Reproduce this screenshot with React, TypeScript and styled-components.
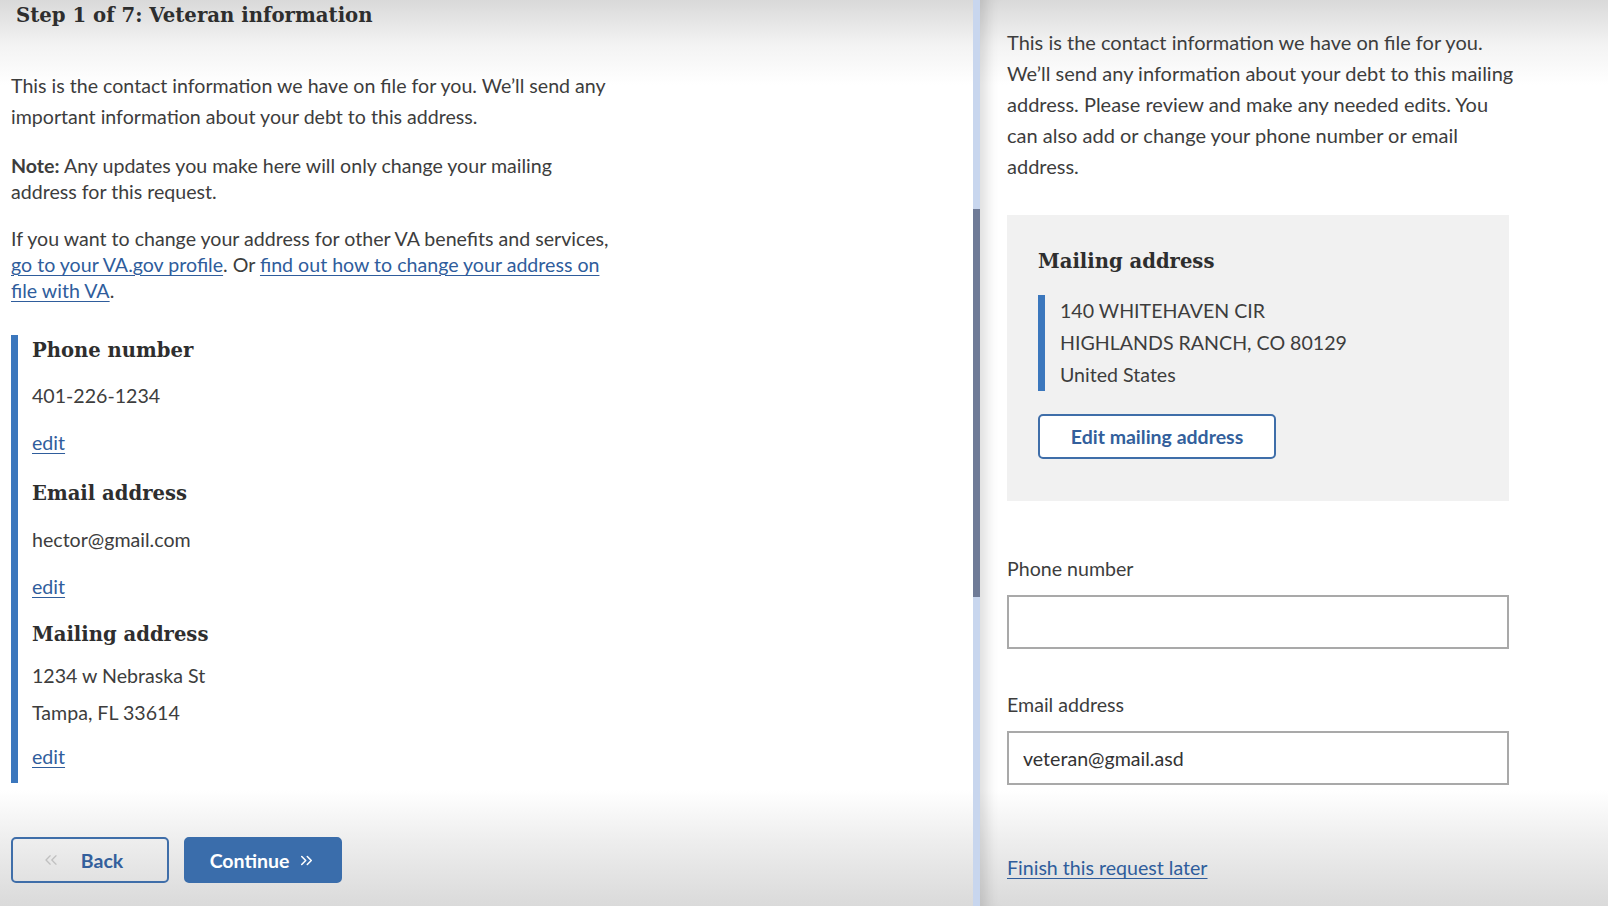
import React from "react";
import styled, { createGlobalStyle } from "styled-components";
import { ChevronsLeft, ChevronsRight } from "lucide-react";

const GlobalStyle = createGlobalStyle`
  html, body { margin: 0; padding: 0; }
  body {
    font-family: Lato, "Liberation Sans", sans-serif;
    color: #3a3a3a;
    -webkit-font-smoothing: antialiased;
  }
`;

const BLUE = "#2f5d9c";
const ACCENT = "#3b77bd";
const SERIF = `"DejaVu Serif", serif`;
const BODY = "19.6px";

const Page = styled.div`
  width: 1608px;
  height: 906px;
  display: grid;
  grid-template-columns: 973px 7px 1fr;
  overflow: hidden;
  background: linear-gradient(
    to bottom,
    #d9d9d9 0px,
    #f3f3f3 45px,
    #ffffff 85px,
    #ffffff 790px,
    #eeeeee 840px,
    #dadada 906px
  );
`;

const LeftPanel = styled.main`
  display: flex;
  flex-direction: column;
  padding-left: 11px;
`;

const Title = styled.h1`
  margin: 0;
  padding: 2px 0 0 5px;
  font-family: ${SERIF};
  font-weight: 700;
  font-size: 19.7px;
  line-height: 28px;
  color: #2e2e2e;
`;

const Para = styled.p<{ $lh: number; $mt: number }>`
  margin: ${(p) => p.$mt}px 0 0;
  font-size: ${BODY};
  line-height: ${(p) => p.$lh}px;
  color: #3d3d3d;
  max-width: 700px;
`;

const Link = styled.a`
  color: ${BLUE};
  text-decoration: underline;
  text-underline-offset: 3px;
  text-decoration-thickness: 1px;
  cursor: pointer;
`;

const Card = styled.section`
  margin-top: 31px;
  border-left: 7px solid ${ACCENT};
  padding: 2px 0 13px 14px;
  display: flex;
  flex-direction: column;
`;

const Heading = styled.h3<{ $mt?: number }>`
  margin: ${(p) => p.$mt ?? 0}px 0 0;
  font-family: ${SERIF};
  font-weight: 700;
  font-size: 19.6px;
  line-height: 28px;
  color: #2e2e2e;
`;

const Value = styled.div<{ $mt: number }>`
  margin-top: ${(p) => p.$mt}px;
  font-size: ${BODY};
  line-height: 26px;
  color: #3d3d3d;
`;

const EditLink = styled(Link)<{ $mt: number }>`
  margin-top: ${(p) => p.$mt}px;
  font-size: ${BODY};
  line-height: 26px;
  align-self: flex-start;
`;

const NavRow = styled.div`
  display: flex;
  gap: 15px;
  margin-top: 54px;
`;

const NavButton = styled.button<{ $primary?: boolean }>`
  box-sizing: border-box;
  width: 158px;
  height: 46px;
  border-radius: 5px;
  display: flex;
  align-items: center;
  justify-content: center;
  gap: ${(p) => (p.$primary ? 8 : 20)}px;
  font-family: Lato, sans-serif;
  font-weight: 700;
  font-size: 19.5px;
  border: 2px solid ${(p) => (p.$primary ? "#3a6dab" : "#3f6ea9")};
  background: ${(p) => (p.$primary ? "#3a6dab" : "transparent")};
  color: ${(p) => (p.$primary ? "#ffffff" : "#335f9c")};
  padding: ${(p) => (p.$primary ? "0" : "0 16px 0 0")};
`;

const Track = styled.div`
  background: #c8d6ee;
  padding-top: 209px;
`;

const Thumb = styled.div`
  height: 388px;
  background: #6f7b97;
`;

const RightPanel = styled.aside`
  display: flex;
  flex-direction: column;
  padding-left: 27px;
  box-shadow: inset 18px 0 14px -12px rgba(0, 0, 0, 0.14);
`;

const RightText = styled.p`
  margin: 27px 0 0;
  width: 540px;
  font-size: 20px;
  line-height: 31px;
  color: #3d3d3d;
`;

const AddressBox = styled.div`
  box-sizing: border-box;
  width: 502px;
  margin-top: 33px;
  background: #f1f1f1;
  padding: 33px 0 42px 31px;
  display: flex;
  flex-direction: column;
`;

const AddressLines = styled.div`
  margin-top: 19px;
  border-left: 7px solid ${ACCENT};
  padding-left: 15px;
  font-size: ${BODY};
  line-height: 32px;
  color: #3d3d3d;
`;

const OutlineButton = styled.button`
  box-sizing: border-box;
  margin-top: 23px;
  align-self: flex-start;
  width: 238px;
  height: 45px;
  border: 2px solid #3f6ea9;
  border-radius: 5px;
  background: #ffffff;
  color: #335f9c;
  font-family: Lato, sans-serif;
  font-weight: 700;
  font-size: 19.5px;
`;

const Field = styled.label<{ $mt: number }>`
  display: flex;
  flex-direction: column;
  gap: 13px;
  margin-top: ${(p) => p.$mt}px;
  font-size: ${BODY};
  line-height: 26px;
  color: #3d3d3d;
`;

const Input = styled.input`
  box-sizing: border-box;
  width: 502px;
  height: 54px;
  border: 2px solid #a9a9a9;
  background: #ffffff;
  padding: 0 14px;
  font-family: Lato, sans-serif;
  font-size: ${BODY};
  color: #333;
  outline: none;
`;

const FinishLink = styled(Link)`
  margin-top: 70px;
  align-self: flex-start;
  font-size: ${BODY};
  line-height: 26px;
`;

export default function App() {
  return (
    <>
      <GlobalStyle />
      <Page>
        <LeftPanel>
          <Title>Step 1 of 7: Veteran information</Title>
          <Para $lh={31} $mt={40}>
            This is the contact information we have on file for you. We’ll send any
            <br />
            important information about your debt to this address.
          </Para>
          <Para $lh={26} $mt={21}>
            <strong>Note:</strong> Any updates you make here will only change your mailing
            <br />
            address for this request.
          </Para>
          <Para $lh={26} $mt={21}>
            If you want to change your address for other VA benefits and services,
            <br />
            <Link>go to your VA.gov profile</Link>. Or{" "}
            <Link>
              find out how to change your address on
              <br />
              file with VA
            </Link>
            .
          </Para>
          <Card>
            <Heading>Phone number</Heading>
            <Value $mt={18}>401-226-1234</Value>
            <EditLink $mt={21}>edit</EditLink>
            <Heading $mt={24}>Email address</Heading>
            <Value $mt={19}>hector@gmail.com</Value>
            <EditLink $mt={21}>edit</EditLink>
            <Heading $mt={21}>Mailing address</Heading>
            <Value $mt={14}>1234 w Nebraska St</Value>
            <Value $mt={11}>Tampa, FL 33614</Value>
            <EditLink $mt={18}>edit</EditLink>
          </Card>
          <NavRow>
            <NavButton>
              <ChevronsLeft size={20} strokeWidth={1.6} color="#c0c0c0" />
              Back
            </NavButton>
            <NavButton $primary>
              Continue
              <ChevronsRight size={19} strokeWidth={2} color="#ffffff" />
            </NavButton>
          </NavRow>
        </LeftPanel>
        <Track>
          <Thumb />
        </Track>
        <RightPanel>
          <RightText>
            This is the contact information we have on file for you.
            <br />
            We’ll send any information about your debt to this mailing
            <br />
            address. Please review and make any needed edits. You
            <br />
            can also add or change your phone number or email
            <br />
            address.
          </RightText>
          <AddressBox>
            <Heading>Mailing address</Heading>
            <AddressLines>
              140 WHITEHAVEN CIR
              <br />
              HIGHLANDS RANCH, CO 80129
              <br />
              United States
            </AddressLines>
            <OutlineButton>Edit mailing address</OutlineButton>
          </AddressBox>
          <Field $mt={55}>
            Phone number
            <Input type="text" defaultValue="" />
          </Field>
          <Field $mt={43}>
            Email address
            <Input type="text" defaultValue="veteran@gmail.asd" />
          </Field>
          <FinishLink>Finish this request later</FinishLink>
        </RightPanel>
      </Page>
    </>
  );
}
